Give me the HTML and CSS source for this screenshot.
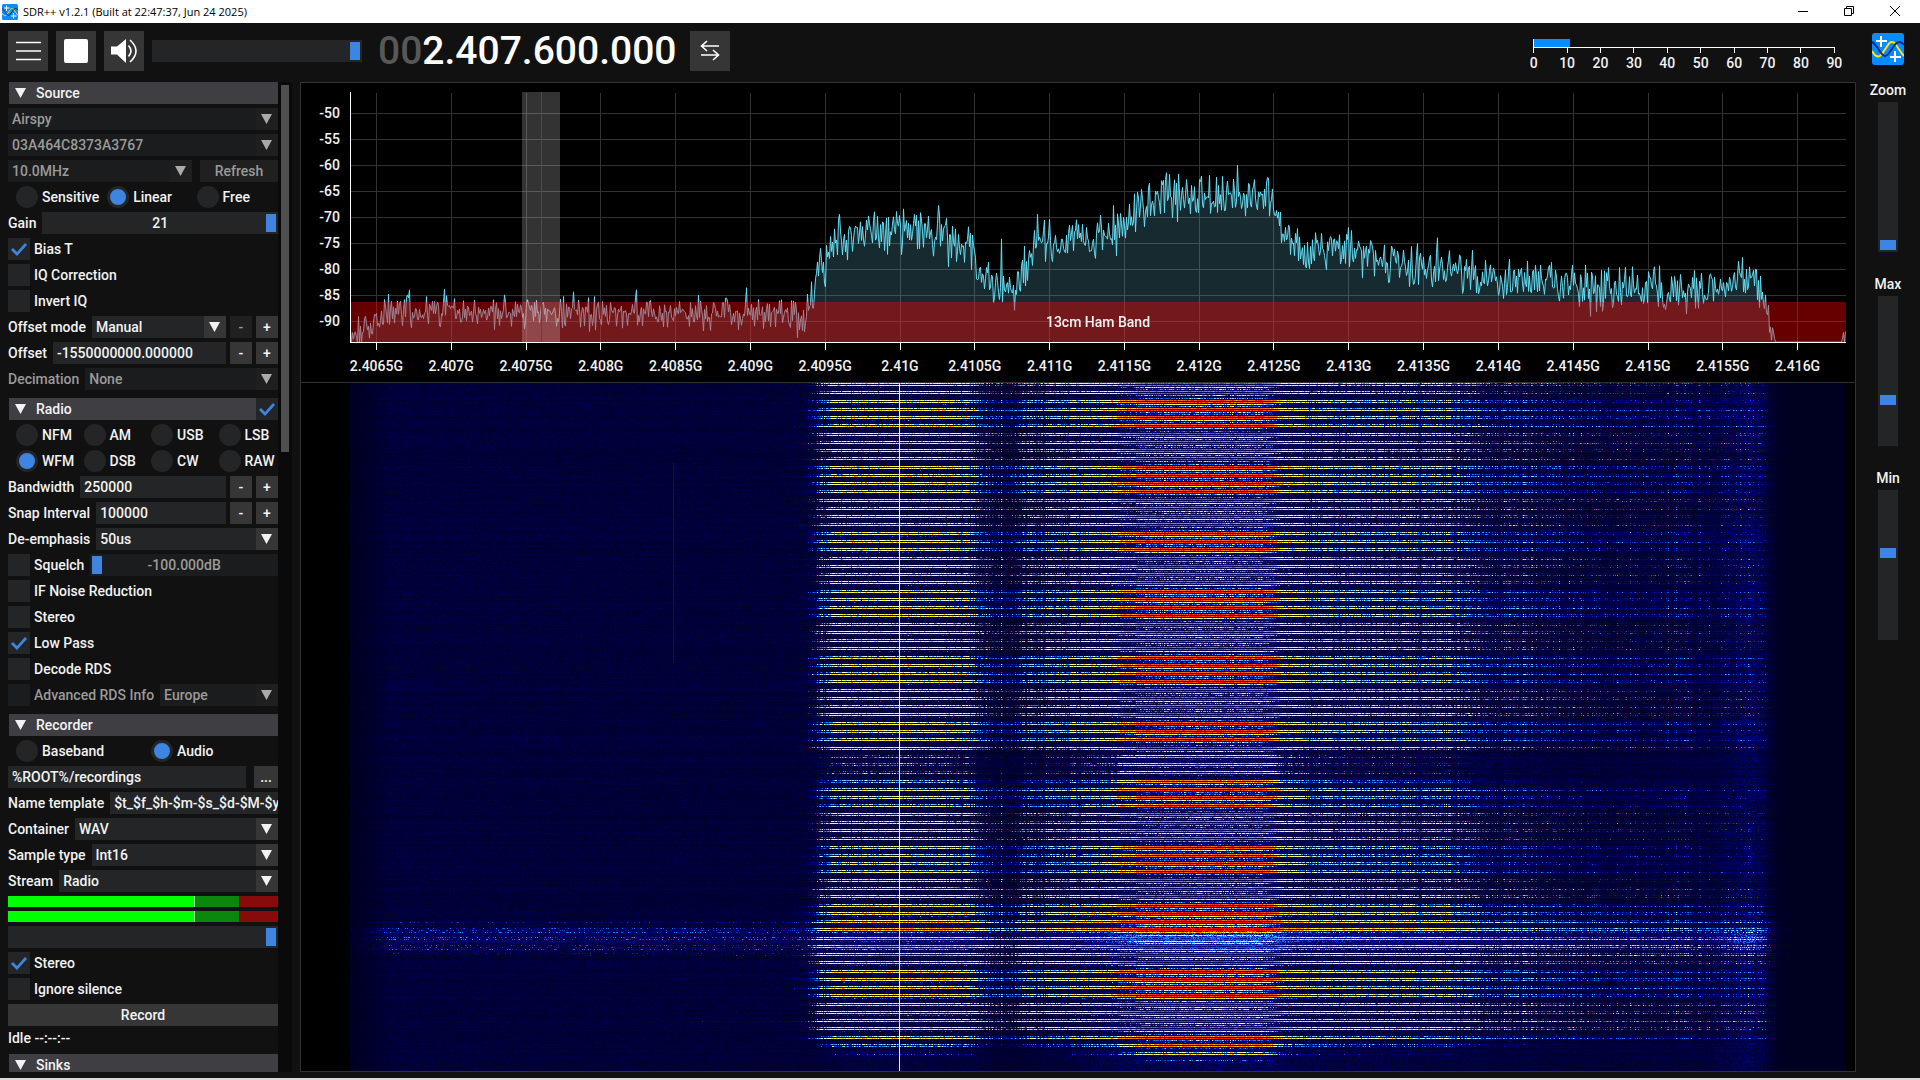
FILE: index.html
```
<!DOCTYPE html>
<html lang="en">
<head>
    <meta charset="UTF-8">
    <meta name="viewport" content="width=device-width, initial-scale=1.0">
    <title>SDR++ v1.2.1</title>
    <link rel="stylesheet" href="styles.css">
</head>
<body>
    <svg class="defs" width="0" height="0" aria-hidden="true">
        <symbol id="logo" viewBox="0 0 32 32">
            <rect width="32" height="32" rx="3" fill="#0a8cff"/>
            <path d="M0 18 C3 24 7 25 10 21 L16 12 C18 8 22 8 24 12 C27 16 29 20 32 23" fill="none" stroke="#ffe60a" stroke-width="2"/>
            <path d="M0 9 C4 11 6 16 9 20 C12 24 14 24 17 20 L22 13 C25 8 29 8 32 12" fill="none" stroke="#0a2a8c" stroke-width="2"/>
            <path d="M9 3v11M4 8h11M23 18v11M18 24h11" stroke="#fff" stroke-width="2"/>
        </symbol>
    </svg>

    <header class="titlebar">
        <svg class="titlebar-icon"><use href="#logo"/></svg>
        <span class="titlebar-text">SDR++ v1.2.1 (Built at 22:47:37, Jun 24 2025)</span>
        <div class="window-buttons">
            <button aria-label="Minimize"><svg width="11" height="11"><path d="M0 5.5h10"/></svg></button>
            <button aria-label="Restore"><svg width="11" height="11"><path d="M.5 2.5h7v7h-7zM2.5 2.5v-2h7v7h-2"/></svg></button>
            <button aria-label="Close"><svg width="11" height="11"><path d="M0 0l10 10M10 0L0 10"/></svg></button>
        </div>
    </header>

    <div class="toolbar">
        <button class="tool-btn" aria-label="Menu">
            <svg viewBox="0 0 40 40"><path d="M8 11.5h25M8 20h25M8 28.5h25" stroke="#fff" stroke-width="1.6"/></svg>
        </button>
        <button class="tool-btn" aria-label="Stop">
            <svg viewBox="0 0 40 40"><rect x="8" y="8" width="24" height="24" rx="2" fill="#fff"/></svg>
        </button>
        <button class="tool-btn" aria-label="Mute">
            <svg viewBox="0 0 40 40">
                <path d="M7 15.5h6L22 8v24l-9-8.500H7z" fill="#fff"/>
                <path d="M24.500 14.500q5 5.500 0 11M26 9q12 11 0 22" fill="none" stroke="#fff" stroke-width="1.600"/>
            </svg>
        </button>
        <div class="volume"><input class="slider" type="range" value="100" aria-label="Volume"></div>
        <div class="frequency"><span>00</span>2.407.600.000</div>
        <button class="tool-btn" aria-label="Tuning mode">
            <svg viewBox="0 0 40 40"><path d="M29 15H11.500M17 10l-5.500 5 5.500 5M11 24h17.500M23 19l5.500 5-5.500 5" fill="none" stroke="#fff" stroke-width="1.600"/></svg>
        </button>
        <div class="snr">
            <div class="snr-scale"><div class="snr-fill"></div></div>
            <div class="snr-labels">
                <span>0</span><span>10</span><span>20</span><span>30</span><span>40</span>
                <span>50</span><span>60</span><span>70</span><span>80</span><span>90</span>
            </div>
        </div>
        <svg class="logo"><use href="#logo"/></svg>
    </div>

    <main>
        <aside>
            <div class="menu">
                <section>
                    <h2><button class="head">Source</button></h2>
                    <div class="row"><span class="select"><select disabled aria-label="Source"><option>Airspy</option></select></span></div>
                    <div class="row"><span class="select"><select disabled aria-label="Device"><option>03A464C8373A3767</option></select></span></div>
                    <div class="row">
                        <span class="select"><select disabled aria-label="Sample rate"><option>10.0MHz</option></select></span>
                        <button class="btn refresh" disabled>Refresh</button>
                    </div>
                    <div class="radios cols-3">
                        <label><input type="radio" name="gain-mode">Sensitive</label>
                        <label><input type="radio" name="gain-mode" checked>Linear</label>
                        <label><input type="radio" name="gain-mode">Free</label>
                    </div>
                    <div class="row">
                        <label for="gain">Gain</label>
                        <div class="slider-box"><input id="gain" class="slider" type="range" max="21" value="21"><output for="gain">21</output></div>
                    </div>
                    <label class="check"><input type="checkbox" checked>Bias T</label>
                    <label class="check"><input type="checkbox">IQ Correction</label>
                    <label class="check"><input type="checkbox">Invert IQ</label>
                    <div class="row">
                        <label for="offset-mode">Offset mode</label>
                        <span class="select"><select id="offset-mode"><option>Manual</option></select></span>
                        <div class="steps"><button class="btn" disabled>-</button><button class="btn">+</button></div>
                    </div>
                    <div class="row">
                        <label for="offset">Offset</label>
                        <input id="offset" class="text" type="text" value="-1550000000.000000">
                        <div class="steps"><button class="btn">-</button><button class="btn">+</button></div>
                    </div>
                    <div class="row">
                        <label for="decimation" class="dim">Decimation</label>
                        <span class="select"><select id="decimation" disabled><option>None</option></select></span>
                    </div>
                </section>

                <section>
                    <h2><button class="head">Radio</button><input type="checkbox" checked aria-label="Radio enabled"></h2>
                    <div class="radios cols-4">
                        <label><input type="radio" name="demod">NFM</label>
                        <label><input type="radio" name="demod">AM</label>
                        <label><input type="radio" name="demod">USB</label>
                        <label><input type="radio" name="demod">LSB</label>
                        <label><input type="radio" name="demod" checked>WFM</label>
                        <label><input type="radio" name="demod">DSB</label>
                        <label><input type="radio" name="demod">CW</label>
                        <label><input type="radio" name="demod">RAW</label>
                    </div>
                    <div class="row">
                        <label for="bandwidth">Bandwidth</label>
                        <input id="bandwidth" class="text" type="text" value="250000">
                        <div class="steps"><button class="btn">-</button><button class="btn">+</button></div>
                    </div>
                    <div class="row">
                        <label for="snap">Snap Interval</label>
                        <input id="snap" class="text" type="text" value="100000">
                        <div class="steps"><button class="btn">-</button><button class="btn">+</button></div>
                    </div>
                    <div class="row">
                        <label for="deemphasis">De-emphasis</label>
                        <span class="select"><select id="deemphasis"><option>50us</option></select></span>
                    </div>
                    <div class="row">
                        <label class="check"><input type="checkbox">Squelch</label>
                        <div class="slider-box dim"><input id="squelch" class="slider" type="range" min="-100" max="0" value="-100" disabled aria-label="Squelch level"><output for="squelch">-100.000dB</output></div>
                    </div>
                    <label class="check"><input type="checkbox">IF Noise Reduction</label>
                    <label class="check"><input type="checkbox">Stereo</label>
                    <label class="check"><input type="checkbox" checked>Low Pass</label>
                    <label class="check"><input type="checkbox">Decode RDS</label>
                    <div class="row">
                        <label class="check dim"><input type="checkbox" disabled>Advanced RDS Info</label>
                        <span class="select"><select disabled aria-label="RDS region"><option>Europe</option></select></span>
                    </div>
                </section>

                <section>
                    <h2><button class="head">Recorder</button></h2>
                    <div class="radios cols-2">
                        <label><input type="radio" name="rec-mode">Baseband</label>
                        <label><input type="radio" name="rec-mode" checked>Audio</label>
                    </div>
                    <div class="row">
                        <input class="text" type="text" value="%ROOT%/recordings" aria-label="Recording folder">
                        <button class="btn browse">...</button>
                    </div>
                    <div class="row">
                        <label for="template">Name template</label>
                        <input id="template" class="text" type="text" value="$t_$f_$h-$m-$s_$d-$M-$y">
                    </div>
                    <div class="row">
                        <label for="container">Container</label>
                        <span class="select"><select id="container"><option>WAV</option></select></span>
                    </div>
                    <div class="row">
                        <label for="sample-type">Sample type</label>
                        <span class="select"><select id="sample-type"><option>Int16</option></select></span>
                    </div>
                    <div class="row">
                        <label for="stream">Stream</label>
                        <span class="select"><select id="stream"><option>Radio</option></select></span>
                    </div>
                    <div class="vu"></div>
                    <div class="vu"></div>
                    <input class="slider" type="range" value="100" aria-label="Recording volume">
                    <label class="check"><input type="checkbox" checked>Stereo</label>
                    <label class="check"><input type="checkbox">Ignore silence</label>
                    <button class="btn">Record</button>
                    <p>Idle --:--:--</p>
                </section>

                <section>
                    <h2><button class="head">Sinks</button></h2>
                </section>
            </div>
            <div class="scrollbar"><div class="scrollbar-grab"></div></div>
        </aside>

        <div class="display">
            <div class="fft">
                <div class="db-labels">
                    <span>-50</span><span>-55</span><span>-60</span><span>-65</span><span>-70</span>
                    <span>-75</span><span>-80</span><span>-85</span><span>-90</span>
                </div>
                <div class="plot">
                    <canvas id="spectrum"></canvas>
                    <span class="band-name">13cm Ham Band</span>
                </div>
            </div>
            <div class="freq-labels">
                <span>2.4065G</span><span>2.407G</span><span>2.4075G</span><span>2.408G</span><span>2.4085G</span>
                <span>2.409G</span><span>2.4095G</span><span>2.41G</span><span>2.4105G</span><span>2.411G</span>
                <span>2.4115G</span><span>2.412G</span><span>2.4125G</span><span>2.413G</span><span>2.4135G</span>
                <span>2.414G</span><span>2.4145G</span><span>2.415G</span><span>2.4155G</span><span>2.416G</span>
            </div>
            <div class="waterfall"><canvas id="waterfall"></canvas></div>
        </div>

        <div class="levels">
            <label for="zoom">Zoom</label>
            <input id="zoom" class="slider vertical" type="range" value="0">
            <label for="max">Max</label>
            <input id="max" class="slider vertical" type="range" value="29">
            <label for="min">Min</label>
            <input id="min" class="slider vertical" type="range" value="59">
        </div>
    </main>

    <script src="script.js"></script>
</body>
</html>
```
FILE: styles.css
```
:root {
    --window: #111111;
    --frame: #232527;
    --frame-dim: #1b1c1d;
    --button: #363636;
    --header: #3f3e43;
    --line: #323232;
    --blue: #3d85e0;
    --text: #f2f2f2;
    --text-dim: #9a9a9a;
}

* {
    margin: 0;
    padding: 0;
    box-sizing: border-box;
}

body {
    height: 100vh;
    display: flex;
    flex-direction: column;
    overflow: hidden;
    background: var(--window);
    border-bottom: 2px solid #d9d9d9;
    color: var(--text);
    font: 500 14px/16px Roboto, sans-serif;
}

button, input, select {
    font: inherit;
    color: inherit;
    border: none;
    border-radius: 0;
    outline: none;
}

.defs {
    position: absolute;
}

/* title bar */
.titlebar {
    height: 23px;
    flex: none;
    display: flex;
    align-items: center;
    background: #fff;
    color: #000;
    padding: 0 2px;
}

.titlebar-icon {
    width: 16px;
    height: 16px;
}

.titlebar-text {
    font: 400 11px/16px "Open Sans", sans-serif;
    margin-left: 5px;
}

.window-buttons {
    margin-left: auto;
    display: flex;
}

.window-buttons button {
    width: 46px;
    height: 23px;
    background: none;
    line-height: 0;
}

.window-buttons path {
    fill: none;
    stroke: #000;
}

/* toolbar */
.toolbar {
    flex: none;
    height: 59px;
    display: flex;
    gap: 8px;
    padding: 8px 16px 11px 8px;
    align-items: center;
}

.tool-btn {
    flex: none;
    width: 40px;
    height: 40px;
    background: var(--button);
}

.tool-btn svg {
    display: block;
    width: 40px;
    height: 40px;
}

.volume {
    width: 210px;
}

.frequency {
    width: 312px;
    padding-left: 8px;
    font-size: 39px;
    line-height: 40px;
    color: #fff;
    white-space: nowrap;
}

.frequency span {
    color: #585858;
}

.snr {
    width: 334px;
    align-self: flex-end;
    margin-left: auto;
    margin-right: 13px;
}

.snr-scale {
    height: 9px;
    margin: 0 16px;
    border: solid #fff;
    border-width: 0 0 1px 1px;
}

.snr-fill {
    width: 12%;
    height: 8px;
    background: #0a8cff;
}

.snr-labels {
    display: flex;
}

.snr-labels span {
    flex: 1;
    text-align: center;
}

.snr-labels span::before {
    content: '';
    display: block;
    width: 1px;
    height: 5px;
    margin: 0 auto 2px;
    background: #fff;
}

.logo {
    width: 32px;
    height: 32px;
    align-self: flex-start;
    margin-top: 2px;
}

/* sliders */
.slider {
    appearance: none;
    display: block;
    width: 100%;
    height: 22px;
    padding: 2px;
    background: var(--frame);
}

.slider::-webkit-slider-thumb {
    appearance: none;
    width: 10px;
    height: 18px;
    background: var(--blue);
}

.slider.vertical {
    writing-mode: vertical-lr;
    direction: rtl;
    width: 20px;
    height: 150px;
}

.slider.vertical::-webkit-slider-thumb {
    width: 16px;
    height: 10px;
}

.slider-box {
    flex: 1;
    display: grid;
}

.slider-box > * {
    grid-area: 1 / 1;
}

.slider-box output {
    place-self: center;
    pointer-events: none;
    z-index: 1;
}

.slider:disabled {
    background: var(--frame-dim);
}

/* side menu */
main {
    flex: 1;
    min-height: 0;
    display: flex;
    padding-bottom: 6px;
}

aside {
    width: 300px;
    flex: none;
    display: flex;
    padding: 0 8px;
}

.menu {
    flex: 1;
    min-width: 0;
    overflow: hidden;
}

.menu section {
    display: flex;
    flex-direction: column;
    gap: 4px;
    margin-bottom: 8px;
}

.menu h2 {
    display: flex;
    padding-left: 1px;
    font: inherit;
}

.head {
    flex: 1;
    height: 22px;
    display: flex;
    align-items: center;
    gap: 10px;
    padding-left: 6px;
    background: var(--header);
}

.head::before,
.select::after {
    content: '';
    width: 11px;
    height: 10px;
    background: currentColor;
    clip-path: polygon(0 0, 100% 0, 50% 100%);
}

.row {
    display: flex;
    align-items: center;
    gap: 6px;
    height: 22px;
    white-space: nowrap;
}

.dim {
    color: var(--text-dim);
}

.select {
    flex: 1;
    min-width: 0;
    position: relative;
}

.select::after {
    position: absolute;
    right: 6px;
    top: 6px;
    pointer-events: none;
}

select {
    appearance: none;
    display: block;
    width: 100%;
    height: 22px;
    padding: 0 26px 0 4px;
    background: linear-gradient(to left, var(--button) 22px, var(--frame) 22px);
}

select:disabled {
    opacity: 1;
    color: var(--text-dim);
    background: linear-gradient(to left, #1f1f1f 22px, var(--frame-dim) 22px);
}

.select:has(select:disabled)::after {
    background: #a9a9a9;
}

.text {
    flex: 1;
    min-width: 0;
    height: 22px;
    padding-left: 4px;
    background: var(--frame);
}

.btn {
    height: 22px;
    background: var(--button);
}

.btn:disabled {
    background: #202020;
    color: var(--text-dim);
}

.refresh {
    width: 78px;
    margin-left: 2px;
}

.browse {
    width: 24px;
    margin-left: 2px;
}

.steps {
    display: flex;
    gap: 4px;
    margin-left: -2px;
}

.steps .btn {
    width: 22px;
}

.check {
    display: flex;
    align-items: center;
    gap: 4px;
    height: 22px;
}

input[type="checkbox"] {
    appearance: none;
    width: 22px;
    height: 22px;
    flex: none;
    background: var(--frame);
}

input[type="checkbox"]:disabled {
    background: var(--frame-dim);
}

input[type="checkbox"]:checked::before {
    content: '';
    display: block;
    height: 22px;
    background: var(--blue);
    clip-path: polygon(3px 12px, 5px 10px, 9px 14px, 17px 5px, 19px 7px, 9px 18px);
}

.radios {
    display: grid;
    row-gap: 4px;
}

.cols-2 { grid-template-columns: repeat(2, 1fr); }
.cols-3 { grid-template-columns: repeat(3, 1fr); }
.cols-4 { grid-template-columns: repeat(4, 1fr); }

.radios label {
    display: flex;
    align-items: center;
    gap: 4px;
    height: 22px;
    padding-left: 8px;
}

input[type="radio"] {
    appearance: none;
    width: 22px;
    height: 22px;
    flex: none;
    border-radius: 50%;
    background: var(--frame);
}

input[type="radio"]:checked {
    border: 3px solid var(--frame);
    background: var(--blue);
}

/* green up to the peak, dim scale after it */
.vu {
    height: 11px;
    background: linear-gradient(to right, #00ff00 69%, #9dff9d 69% 69.4%, #0b870b 69.4% 85.6%, #870b0b 85.6%);
}

.scrollbar {
    width: 14px;
    padding: 3px;
    background: #0a0a0a;
}

.scrollbar-grab {
    height: 37.3%;
    background: #4f4f4f;
}

/* spectrum and waterfall */
.display {
    flex: 1;
    min-width: 0;
    display: flex;
    flex-direction: column;
    background: #000;
    border: 1px solid var(--line);
}

.fft {
    display: flex;
    padding: 9px 9px 0 0;
}

.db-labels {
    width: 49px;
    padding: 8px 10px 0 0;
    text-align: right;
}

.db-labels span {
    display: block;
    line-height: 26px;
}

.plot {
    flex: 1;
    min-width: 0;
    height: 258px;
    position: relative;
}

canvas {
    display: block;
    width: 100%;
    height: 100%;
}

.band-name {
    position: absolute;
    left: 0;
    right: 0;
    bottom: 20px;
    text-align: center;
}

.freq-labels {
    display: flex;
    padding: 8px 20px 8px 38px;
    border-bottom: 1px solid var(--line);
}

.freq-labels span {
    flex: 1;
    text-align: center;
}

.waterfall {
    flex: 1;
    min-height: 0;
    padding: 0 9px 0 49px;
}

/* right hand levels */
.levels {
    width: 64px;
    flex: none;
    display: flex;
    flex-direction: column;
    align-items: center;
    gap: 4px;
}

.levels .slider {
    margin-bottom: 20px;
}
```
FILE: script.js
```
let seed = 1337;
function rnd() {
    seed = (seed * 1664525 + 1013904223) >>> 0;
    return seed / 4294967296;
}

// linear interpolation over [x, value] points
function curve(points, x) {
    for (let i = 1; i < points.length; i++) {
        if (x <= points[i][0]) {
            const [x0, v0] = points[i - 1];
            const [x1, v1] = points[i];
            return v0 + (v1 - v0) * (x - x0) / (x1 - x0);
        }
    }
    return points[points.length - 1][1];
}

// points below are given on a 1496 wide plot
const SPAN = 1496;

const levels = [
    [0, -93], [25, -91.5], [34, -88], [455, -88.5], [462, -84], [470, -80.5], [478, -77],
    [490, -74.5], [510, -73], [560, -72.8], [600, -73.2], [618, -74.5], [624, -77], [629, -81], [640, -82],
    [652, -84], [660, -84.5], [668, -82], [676, -78.5], [686, -75.5], [710, -74.5], [750, -74], [768, -72],
    [780, -69.5], [790, -67.5], [800, -66.3], [915, -66.3], [922, -68], [930, -71], [943, -75.5],
    [960, -76.5], [1000, -76], [1025, -77], [1040, -79.5], [1085, -79.5], [1110, -80],
    [1150, -82.5], [1190, -82.5], [1220, -82], [1235, -84], [1270, -84], [1380, -84.5],
    [1390, -81.5], [1402, -81.5], [1408, -83.5], [1415, -87], [1426, -94], [1430, -100], [1480, -100], [1496, -93]
];

const spikes = {
    59: -84, 94: -83.9, 223: -84.4, 286: -84, 396: -83.6, 489: -69.5, 524: -69, 538: -70, 588: -67.8,
    651: -74.2, 687: -69.5, 763: -67.8, 799: -63.5, 859: -62, 887: -60, 1087: -74, 1392: -77.8
};

function fit(canvas) {
    canvas.width = canvas.clientWidth;
    canvas.height = canvas.clientHeight;
    return canvas.getContext('2d');
}

function drawSpectrum() {
    const canvas = document.getElementById('spectrum');
    const ctx = fit(canvas);
    const w = canvas.width;
    const bottom = 250;
    const k = w / SPAN;
    const toY = db => 21 + (-50 - db) * 5.2;
    const step = w / 20;

    ctx.fillStyle = '#323232';
    for (let db = -50; db >= -90; db -= 5) {
        ctx.fillRect(0, Math.round(toY(db)), w, 1);
    }
    for (let i = 0; i < 20; i++) {
        ctx.fillRect(Math.floor(step / 2 - 11 + i * step), 1, 1, bottom);
    }

    const trace = [];
    for (let x = 0; x < w; x++) {
        const px = Math.round(x / k);
        const quiet = px < 455;
        let db = curve(levels, px) + (rnd() + rnd() - 1) * (quiet ? 3.6 : 5);
        if (rnd() < 0.08) db -= rnd() * 3;
        if (spikes[px]) db = spikes[px];
        trace.push(Math.min(toY(db), bottom));
    }

    ctx.beginPath();
    ctx.moveTo(0, bottom);
    trace.forEach((y, x) => ctx.lineTo(x + 0.5, y));
    ctx.lineTo(w, bottom);
    ctx.fillStyle = 'rgba(110, 210, 235, 0.2)';
    ctx.fill();

    ctx.beginPath();
    trace.forEach((y, x) => ctx.lineTo(x + 0.5, y));
    ctx.strokeStyle = '#67def5';
    ctx.stroke();

    // band plan
    ctx.fillStyle = 'rgba(255, 0, 0, 0.4)';
    ctx.fillRect(0, 210, w, bottom - 210);

    // VFO
    ctx.fillStyle = 'rgba(255, 255, 255, 0.2)';
    ctx.fillRect(172 * k, 0, 38 * k, bottom);
    ctx.fillStyle = '#ff0000';
    ctx.fillRect(Math.round(191 * k), 0, 1, bottom);

    // axes
    ctx.clearRect(0, bottom + 1, w, 10);
    ctx.fillStyle = '#fff';
    ctx.fillRect(0, 0, 1, bottom);
    ctx.fillRect(0, bottom, w, 1);
    for (let i = 0; i < 20; i++) {
        ctx.fillRect(Math.floor(step / 2 - 11 + i * step), bottom, 1, 8);
    }
}

const colors = [
    [0, 0, 32], [0, 0, 48], [0, 0, 80], [0, 0, 145], [30, 144, 255], [255, 255, 255], [255, 255, 0],
    [254, 109, 22], [254, 109, 22], [255, 0, 0], [255, 0, 0], [198, 0, 0], [159, 0, 0]
];

// burst level and noise floor across the span, in color map steps
const burst = [
    [0, 0], [430, 0.8], [455, 1.8], [465, 3.6], [478, 5.2], [520, 5.9], [560, 6.2], [615, 5.8], [628, 4.8],
    [640, 3.8], [655, 3], [664, 3.2], [676, 4.5], [710, 5.2], [760, 6], [774, 7.2], [800, 8.6],
    [850, 9.1], [910, 8.9], [925, 7.8], [930, 6.2], [960, 5.5], [1030, 5.1], [1120, 4.5], [1135, 3.9],
    [1190, 3.6], [1240, 3], [1380, 2.8], [1400, 3.2], [1416, 2.4], [1425, 0.5], [1440, 0]
];

const floor = [
    [0, 0.2], [40, 1.4], [430, 1.3], [455, 1.3], [500, 1.6], [620, 1.5], [660, 1], [720, 1.5],
    [780, 2], [920, 2.2], [940, 1.8], [1140, 1.5], [1250, 1.3], [1360, 1.5], [1400, 2.1],
    [1412, 1.8], [1428, 0.4], [1440, 0], [1496, 0]
];

// strength over time, top line first
const fade = [
    [0, 0], [364, -0.1], [370, -1.8], [385, -2.3], [398, -1.2], [408, -0.5], [500, -0.4], [535, 0.5],
    [548, 1.4], [565, 1.4], [580, 0.4], [640, 0.5], [655, -0.2], [668, -2.8], [674, -3.5], [682, -9]
];

function drawWaterfall() {
    const canvas = document.getElementById('waterfall');
    const ctx = fit(canvas);
    const w = canvas.width;
    const h = canvas.height;
    const img = ctx.createImageData(w, h);
    const k = w / SPAN;

    const cols = [];
    for (let x = 0; x < w; x++) {
        const px = x / k;
        cols.push({
            burst: curve(burst, px) + (rnd() + rnd() - 1) * 1.1,
            floor: curve(floor, px),
            active: px < 1440
        });
    }
    cols[Math.round(651 * k)].burst = 5;

    // bursts come in groups: two strong lines with a weak one on either side
    const gains = new Array(h).fill(-9);
    for (let n = 0; n * 8.262 < h; n++) {
        const y = Math.round(1 + n * 8.262);
        gains[y - 3] = -5.4;
        gains[y - 1] = n % 2 ? -1.1 : -0.4;
        gains[y + 1] = n % 2 ? -0.1 : -0.5;
        gains[y + 3] = n % 2 ? -4.8 : -3.8;
    }

    for (let y = 0; y < h; y++) {
        const gain = gains[y] + curve(fade, y) + (rnd() - 0.5) * 0.5;
        const glow = Math.exp(-Math.pow((y - 555) / 12, 2)) * 0.7;
        const ripple = (rnd() - 0.5) * 0.6;

        for (let x = 0; x < w; x++) {
            const c = cols[x];
            let v = 0;
            if (c.active) {
                let base = c.floor * (1 + glow) + ripple * Math.min(c.floor, 1) + (rnd() - 0.6) * c.floor * 0.8;
                if (glow > 0.1 && gain > -3 && rnd() < 0.3) base += 1.4 * Math.min(c.floor, 1);
                const sig = c.burst + gain + (rnd() + rnd() - 1) * 1.3;
                v = Math.max(base, sig, 0);
            }
            const i = Math.min(Math.floor(v), colors.length - 2);
            const f = v - i;
            const p = (y * w + x) * 4;
            for (let n = 0; n < 3; n++) {
                img.data[p + n] = colors[i][n] + (colors[i + 1][n] - colors[i][n]) * f;
            }
            img.data[p + 3] = 255;
        }
    }
    ctx.putImageData(img, 0, 0);

    // faint carrier on the left
    ctx.fillStyle = 'rgba(30, 90, 255, 0.2)';
    ctx.fillRect(Math.round(323 * k), 80, 1, 200);

    // DC spike
    ctx.fillStyle = '#ffff50';
    ctx.fillRect(Math.round(549 * k), 0, 1, h);
}

function draw() {
    seed = 1337;
    drawSpectrum();
    drawWaterfall();
}

window.addEventListener('resize', draw);
draw();
```
